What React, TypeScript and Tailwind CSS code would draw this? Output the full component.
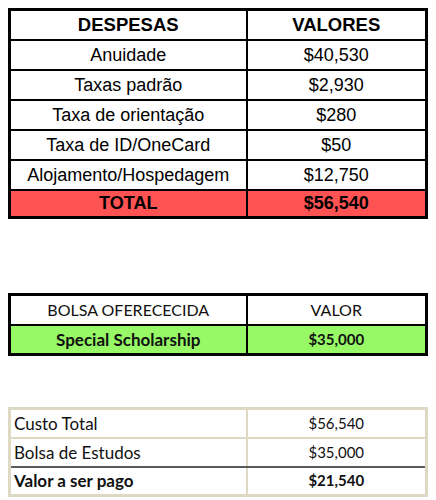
import type { FunctionComponent } from "react";

const despesas = [
  { label: "Anuidade", value: "$40,530" },
  { label: "Taxas padrão", value: "$2,930" },
  { label: "Taxa de orientação", value: "$280" },
  { label: "Taxa de ID/OneCard", value: "$50" },
  { label: "Alojamento/Hospedagem", value: "$12,750" },
];

const arial = "font-['Liberation_Sans',Arial,sans-serif]";
const calibri = "font-['Lato','Open_Sans',sans-serif]";

const ExpensesTable: FunctionComponent = () => (
  <table
    className={`w-[420px] border-collapse border-[3px] border-black text-[18px] text-black ${arial}`}
  >
    <tbody>
      <tr>
        <td className="h-[30px] w-[237px] border-2 border-black p-0 text-center text-[18.5px] font-bold leading-none">
          DESPESAS
        </td>
        <td className="h-[30px] border-2 border-black p-0 text-center text-[18.5px] font-bold leading-none">
          VALORES
        </td>
      </tr>
      {despesas.map((row) => (
        <tr key={row.label}>
          <td className="h-[30px] border-2 border-black p-0 text-center leading-none">
            {row.label}
          </td>
          <td className="h-[30px] border-2 border-black p-0 text-center leading-none">
            {row.value}
          </td>
        </tr>
      ))}
      <tr className="bg-[#ff5252]">
        <td className="h-[28px] border-2 border-black p-0 text-center font-bold leading-none">
          TOTAL
        </td>
        <td className="h-[28px] border-2 border-black p-0 text-center font-bold leading-none">
          $56,540
        </td>
      </tr>
    </tbody>
  </table>
);

const ScholarshipTable: FunctionComponent = () => (
  <table
    className={`w-[420px] border-collapse border-[3px] border-black text-[17px] text-[#111] ${calibri}`}
  >
    <tbody>
      <tr>
        <td className="h-[30px] w-[237px] border-2 border-black p-0 text-center text-[16px] leading-none">
          BOLSA OFERECECIDA
        </td>
        <td className="h-[30px] border-2 border-black p-0 text-center text-[16px] leading-none">
          VALOR
        </td>
      </tr>
      <tr className="bg-[#97f966]">
        <td className="h-[30px] border-2 border-black p-0 text-center font-bold leading-none">
          Special Scholarship
        </td>
        <td className="h-[30px] border-2 border-black p-0 text-center text-[15px] font-bold leading-none">
          $35,000
        </td>
      </tr>
    </tbody>
  </table>
);

const SummaryTable: FunctionComponent = () => (
  <table
    className={`w-[420px] border-collapse border-[3px] border-[#ddd9c3] text-[17px] text-[#111] ${calibri}`}
  >
    <tbody>
      <tr>
        <td className="h-[29px] w-[237px] border-2 border-[#ddd9c3] px-[3px] py-0 text-left leading-none">
          Custo Total
        </td>
        <td className="h-[29px] border-2 border-[#ddd9c3] p-0 text-center text-[15px] leading-none">
          $56,540
        </td>
      </tr>
      <tr>
        <td className="h-[29px] border-2 border-[#ddd9c3] border-b-[#5a5a5a] px-[3px] py-0 text-left leading-none">
          Bolsa de Estudos
        </td>
        <td className="h-[29px] border-2 border-[#ddd9c3] border-b-[#5a5a5a] p-0 text-center text-[15px] leading-none">
          $35,000
        </td>
      </tr>
      <tr>
        <td className="h-[29px] border-2 border-[#ddd9c3] px-[3px] py-0 text-left font-bold leading-none">
          Valor a ser pago
        </td>
        <td className="h-[29px] border-2 border-[#ddd9c3] p-0 text-center text-[15px] font-bold leading-none">
          $21,540
        </td>
      </tr>
    </tbody>
  </table>
);

export default function App() {
  return (
    <div className="flex h-[500px] w-[436px] flex-col bg-white pl-[8px] pt-[8px]">
      <ExpensesTable />
      <div className="mt-[74px]">
        <ScholarshipTable />
      </div>
      <div className="mt-[51px]">
        <SummaryTable />
      </div>
    </div>
  );
}
